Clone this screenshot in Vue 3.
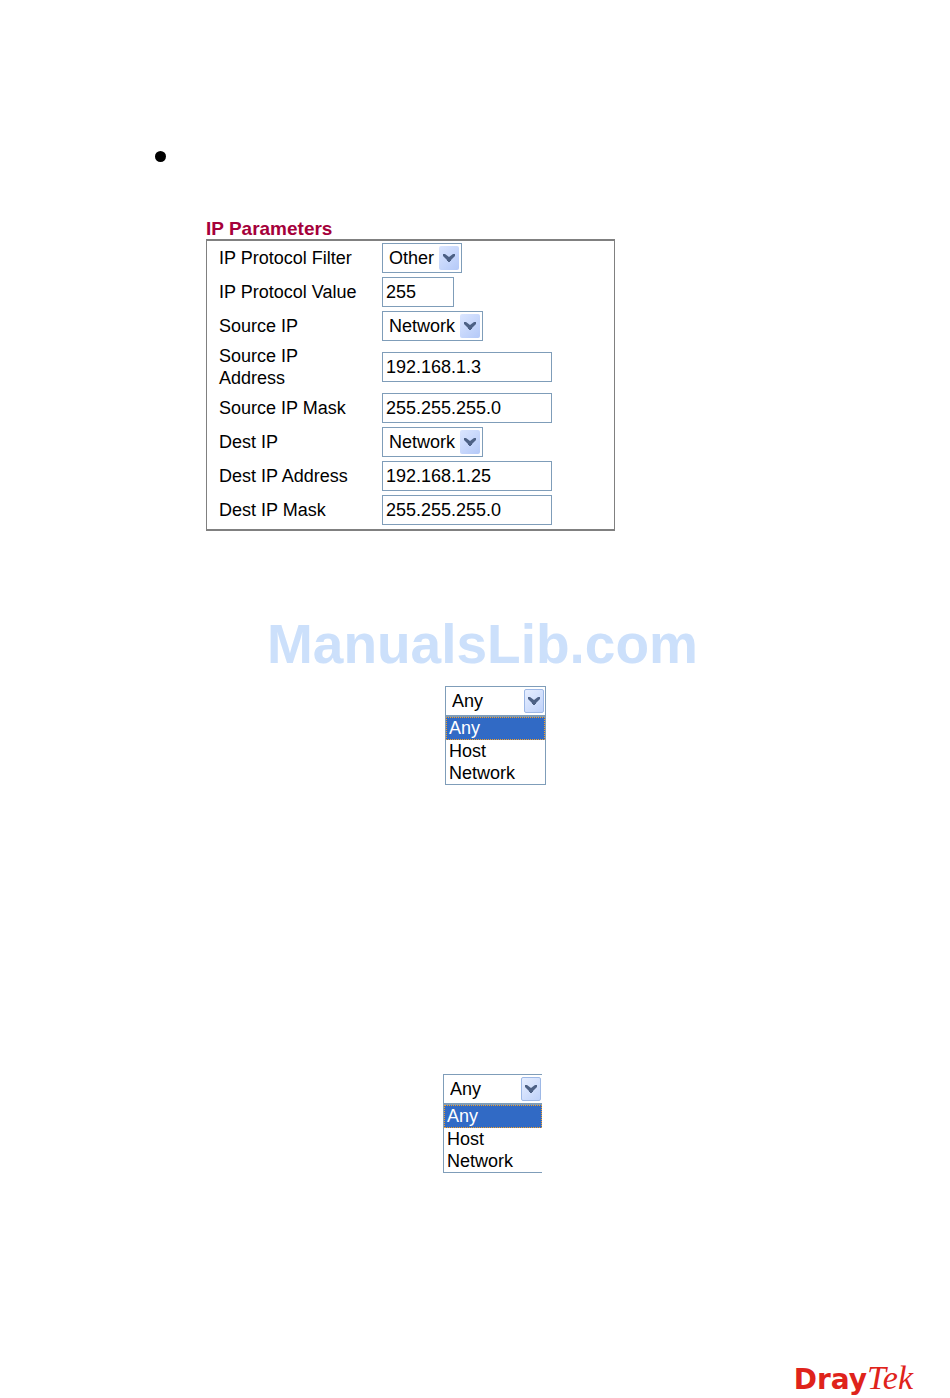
<template>
    <div class="page">
        <main class="content">
            <span class="bullet"></span>

            <section class="params">
                <h2 class="params-title">IP Parameters</h2>
                <form class="params-box" @submit.prevent>
                    <div v-for="field in fields" :key="field.id" class="row">
                        <label :for="field.id" class="row-label">{{ field.label }}</label>
                        <div v-if="field.options" :class="['combo', field.size]">
                            <select :id="field.id" v-model="field.value">
                                <option v-for="option in field.options" :key="option">{{ option }}</option>
                            </select>
                            <span class="combo-arrow">
                                <svg viewBox="0 0 12 8" width="12" height="8">
                                    <path d="M0 0h2l4 3 4-3h2v2L8 6v1H7v1H5V7H4V6L0 2z" />
                                </svg>
                            </span>
                        </div>
                        <input v-else :id="field.id" v-model="field.value" type="text" :class="['text', field.size]">
                    </div>
                </form>
            </section>

            <p class="watermark">ManualsLib.com</p>

            <div v-for="menu in menus" :key="menu.id" :class="['menu', menu.id]">
                <div class="combo">
                    <select :id="menu.id" v-model="menu.value" :aria-label="menu.label">
                        <option v-for="option in addressTypes" :key="option">{{ option }}</option>
                    </select>
                    <span class="combo-arrow">
                        <svg viewBox="0 0 12 8" width="12" height="8">
                            <path d="M0 0h2l4 3 4-3h2v2L8 6v1H7v1H5V7H4V6L0 2z" />
                        </svg>
                    </span>
                </div>
                <ul class="menu-list" role="listbox" :aria-label="menu.label">
                    <li v-for="option in addressTypes" :key="option" role="option"
                        :aria-selected="option === menu.value" :class="{ active: option === menu.value }"
                        @click="menu.value = option">{{ option }}</li>
                </ul>
            </div>
        </main>

        <footer class="footer">
            <div class="logo"><span class="logo-dray">Dray</span><span class="logo-tek">Tek</span></div>
        </footer>
    </div>
</template>

<script setup>
import { reactive } from 'vue';

const addressTypes = ['Any', 'Host', 'Network'];

const fields = reactive([
    { id: 'protocol-filter', label: 'IP Protocol Filter', value: 'Other', options: ['Any', 'TCP', 'UDP', 'Other'], size: 'small' },
    { id: 'protocol-value', label: 'IP Protocol Value', value: '255', size: 'small' },
    { id: 'source-ip', label: 'Source IP', value: 'Network', options: addressTypes },
    { id: 'source-address', label: 'Source IP Address', value: '192.168.1.3' },
    { id: 'source-mask', label: 'Source IP Mask', value: '255.255.255.0' },
    { id: 'dest-ip', label: 'Dest IP', value: 'Network', options: addressTypes },
    { id: 'dest-address', label: 'Dest IP Address', value: '192.168.1.25' },
    { id: 'dest-mask', label: 'Dest IP Mask', value: '255.255.255.0' }
]);

const menus = reactive([
    { id: 'source-menu', label: 'Source IP', value: 'Any' },
    { id: 'dest-menu', label: 'Dest IP', value: 'Any' }
]);
</script>

<style>
body {
    margin: 0;
    background: #fff;
}
</style>

<style scoped>
.page {
    display: flex;
    flex-direction: column;
    box-sizing: border-box;
    min-height: 100vh;
    font-family: "Liberation Sans", Arial, sans-serif;
    font-size: 18px;
    line-height: 22px;
    color: #000;
}

.content {
    display: flex;
    flex-direction: column;
    padding: 151px 24px 24px 155px;
}

.bullet {
    width: 11px;
    height: 11px;
    border-radius: 50%;
    background: #000;
}

/* Formulario */
.params {
    max-width: 409px;
    margin: 56px 0 0 51px;
}

.params-title {
    margin: 0;
    font-size: 19px;
    line-height: 21px;
    color: #a5003a;
}

.params-box {
    display: grid;
    gap: 4px;
    padding: 2px 12px 4px;
    border: solid #808080;
    border-width: 2px 1px;
}

.row {
    display: grid;
    grid-template-columns: 139px 1fr;
    column-gap: 24px;
    align-items: center;
}

.text,
.combo {
    box-sizing: border-box;
    height: 30px;
    border: 1px solid #7f9db9;
    background: #fff;
}

.text {
    width: 170px;
    padding: 0 3px;
    font: inherit;
    color: inherit;
}

.text.small {
    width: 72px;
}

.combo {
    position: relative;
    width: 101px;
}

.combo.small {
    width: 80px;
}

.combo select {
    appearance: none;
    width: 100%;
    height: 100%;
    padding: 0 24px 0 6px;
    border: 0;
    background: none;
    font: inherit;
    color: inherit;
}

.combo-arrow {
    position: absolute;
    top: 2px;
    right: 2px;
    bottom: 2px;
    display: flex;
    align-items: center;
    justify-content: center;
    width: 20px;
    border-radius: 2px;
    background: linear-gradient(135deg, #dbe6ff, #b4c9f8);
    pointer-events: none;
}

.combo-arrow svg {
    fill: #4d6185;
}

.watermark {
    margin: 83px 0 0 112px;
    font-size: 55px;
    line-height: 60px;
    font-weight: bold;
    color: #cce0fb;
}

/* Listas desplegadas */
.menu {
    width: 101px;
    margin: 12px 0 0 290px;
}

.menu .combo {
    width: 100%;
}

.menu .combo-arrow {
    box-sizing: border-box;
    right: 1px;
    border: 1px solid #9db8e6;
    background: linear-gradient(135deg, #e6eeff, #bfd2fa);
}

.menu-list {
    margin: 0;
    padding: 0;
    border: 1px solid #7f9db9;
    list-style: none;
}

.menu-list li {
    padding: 0 3px;
}

.menu-list .active {
    padding: 0 2px;
    border: 1px dotted #f5a028;
    line-height: 21px;
    background: #316ac5;
    color: #fff;
}

.dest-menu {
    width: 99px;
    margin: 289px 0 0 288px;
}

.dest-menu .combo,
.dest-menu .menu-list {
    border-right: 0;
}

/* Pie */
.footer {
    display: flex;
    justify-content: flex-end;
    margin-top: auto;
    padding-right: 37px;
}

.logo {
    display: flex;
    align-items: baseline;
    line-height: 36px;
    color: #df231b;
}

.logo-dray {
    font-family: "DejaVu Sans", sans-serif;
    font-size: 28px;
    font-weight: bold;
}

.logo-tek {
    font-family: "Liberation Serif", serif;
    font-size: 34px;
    font-style: italic;
}
</style>
